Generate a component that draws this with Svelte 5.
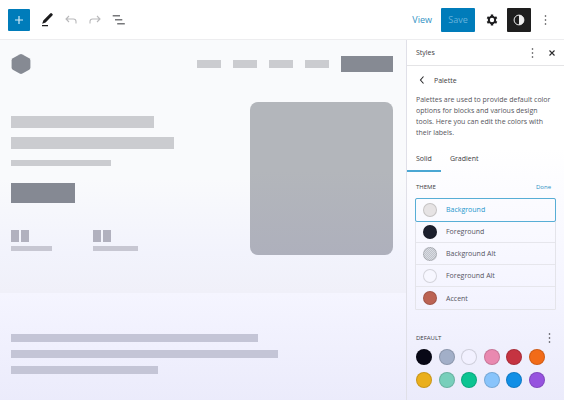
<script>
  let selected = $state('Background');
  let tab = $state('Solid');
  const theme = [
    { name: 'Background', color: '#e6e3e4' },
    { name: 'Foreground', color: '#1c1f2d' },
    { name: 'Background Alt', color: '#d9dce2', dotted: true },
    { name: 'Foreground Alt', color: '#f7f7ff' },
    { name: 'Accent', color: '#bc6353' }
  ];
  const defaults = [
    ['Black', '#080816'], ['Bluish gray', '#a2afc8'], ['White', '#f2f1ff'],
    ['Pink', '#e989b0'], ['Red', '#c53341'], ['Orange', '#f26b18'],
    ['Amber', '#eaaf1c'], ['Light green', '#78cfbb'], ['Green', '#0cc492'],
    ['Light blue', '#89c4fb'], ['Blue', '#118fe6'], ['Purple', '#9653df']
  ];
</script>

{#snippet dots()}
  <svg width="12" height="12" viewBox="0 0 12 12" fill="currentColor">
    <circle cx="6.5" cy="2" r=".8" /><circle cx="6.5" cy="6" r=".8" /><circle cx="6.5" cy="10" r=".8" />
  </svg>
{/snippet}

<div class="editor">
  <header class="topbar">
    <div class="tools">
      <button class="add" aria-label="Add block">
        <svg width="22" height="22" viewBox="0 0 22 22" stroke="#d3eaf7" stroke-width="1.2"><path d="M11 7v8M7 11h8" /></svg>
      </button>
      <button aria-label="Edit">
        <svg width="16" height="16" viewBox="0 0 16 16"><path d="M11.2 1.4Q12 .7 12.9 1.4L13.5 2Q14.2 2.8 13.4 3.6L6.6 10.6L3.2 11.8L4.3 8.4ZM3 13h6v1.2H3Z" fill="#1b1b1d" /></svg>
      </button>
      <button class="faded" aria-label="Undo">
        <svg width="16" height="16" viewBox="0 0 16 16" fill="none" stroke="currentColor" stroke-width="1.1"><path d="M6 4L3 7L6 10M3.4 7H10.4Q13 7 13 9.6V11.5" /></svg>
      </button>
      <button class="faded" aria-label="Redo">
        <svg width="16" height="16" viewBox="0 0 16 16" fill="none" stroke="currentColor" stroke-width="1.1"><path d="M10 4L13 7L10 10M12.6 7H5.6Q3 7 3 9.6V11.5" /></svg>
      </button>
      <button aria-label="List view">
        <svg width="16" height="16" viewBox="0 0 16 16" fill="#77787b"><path d="M1.7 3h7.3v1.6H1.7ZM4 7h7.3v1.6H4ZM6.2 11h7.6v1.6H6.2Z" /></svg>
      </button>
    </div>
    <div class="actions">
      <button class="view">View</button>
      <button class="save">Save</button>
      <button class="cog" aria-label="Settings">
        <svg width="14" height="14" viewBox="0 0 14 14" fill="none" stroke="#1c1c1e">
          <circle cx="7" cy="7" r="3.2" stroke-width="2" />
          <path d="M7 1.6V3.4M7 10.6V12.4M2.3 4.3L3.9 5.2M10.1 8.8L11.7 9.7M2.3 9.7L3.9 8.8M10.1 5.2L11.7 4.3" stroke-width="2.4" />
        </svg>
      </button>
      <button class="contrast" aria-label="Styles" aria-pressed="true">
        <svg width="24" height="24" viewBox="0 0 24 24"><circle cx="12" cy="12" r="4.9" fill="none" stroke="#eee" /><path d="M12 7a5 5 0 0 1 0 10Z" fill="#eee" /></svg>
      </button>
      <button class="more" aria-label="Options">{@render dots()}</button>
    </div>
  </header>

  <div class="body">
    <main class="canvas">
      <section class="hero">
        <div class="site-nav">
          <svg width="20" height="22" viewBox="0 0 20 22"><path d="M8.6 1.4Q10 .6 11.4 1.4L18.2 5.3Q19.4 6 19.4 7.4V14.6Q19.4 16 18.2 16.7L11.4 20.6Q10 21.4 8.6 20.6L1.8 16.7Q.6 16 .6 14.6V7.4Q.6 6 1.8 5.3Z" fill="#868a93" /></svg>
          <div class="links"><i></i><i></i><i></i><i></i><b></b></div>
        </div>
        <div class="columns">
          <div class="copy">
            <div class="line l1"></div>
            <div class="line l2"></div>
            <div class="line l3"></div>
            <div class="cta"></div>
            <div class="stats">
              <div class="stat"><span></span><span></span><p class="short"></p></div>
              <div class="stat"><span></span><span></span><p></p></div>
            </div>
          </div>
          <div class="photo"></div>
        </div>
      </section>
      <section class="text">
        <div class="row r1"></div>
        <div class="row r2"></div>
        <div class="row r3"></div>
      </section>
    </main>

    <aside>
      <div class="head">
        <strong>Styles</strong>
        <button class="menu" aria-label="More">{@render dots()}</button>
        <button aria-label="Close">
          <svg width="8" height="8" viewBox="0 0 8 8" stroke="#2a2a2c" stroke-width="1.1"><path d="M1.5 1.5L6.5 6.5M6.5 1.5L1.5 6.5" /></svg>
        </button>
      </div>
      <div class="crumb">
        <button aria-label="Back">
          <svg width="12" height="12" viewBox="0 0 12 12" fill="none" stroke="#2a2a2c" stroke-width="1.1"><path d="M7.5 2.5L4.5 6L7.5 9.5" /></svg>
        </button>
        <h2>Palette</h2>
      </div>
      <p class="desc">Palettes are used to provide default color options for blocks and various design tools. Here you can edit the colors with their labels.</p>
      <div class="tabs" role="tablist">
        {#each ['Solid', 'Gradient'] as name}
          <button role="tab" aria-selected={tab === name} onclick={() => (tab = name)}>{name}</button>
        {/each}
      </div>
      <div class="label theme"><h3>THEME</h3><button>Done</button></div>
      <div class="list">
        {#each theme as c}
          <button class="item" class:selected={selected === c.name} onclick={() => (selected = c.name)}>
            <span class="dot" class:dotted={c.dotted} style:background-color={c.color}></span>{c.name}
          </button>
        {/each}
      </div>
      <div class="label default"><h3>DEFAULT</h3><button class="menu" aria-label="Default options">{@render dots()}</button></div>
      <div class="swatches">
        {#each defaults as [name, color]}
          <button aria-label={name} style:background-color={color}></button>
        {/each}
      </div>
    </aside>
  </div>
</div>

<style>
  :global(body) { margin: 0; }
  .editor { min-height: 100vh; display: flex; flex-direction: column; font-family: "Open Sans", "Noto Sans", sans-serif; font-size: 7px; line-height: 11px; color: #3c3c42; }
  .editor * { box-sizing: border-box; }
  button { border: 0; padding: 0; margin: 0; background: none; font: inherit; color: inherit; cursor: pointer; }
  svg { display: block; }
  h2, h3, p { margin: 0; font-size: inherit; font-weight: 400; }
  .topbar { height: 40px; display: flex; align-items: center; justify-content: space-between; padding: 0 13px 0 8px; background: #fff; border-bottom: 1px solid #ededef; }
  .tools, .actions { display: flex; align-items: center; }
  .tools { gap: 8px; }
  .add { width: 22px; height: 22px; background: #007cba; border-radius: 1px; margin-right: 1px; }
  .faded { color: #b9b9bb; }
  .view { color: #3192c4; font-size: 9px; margin-right: 9px; }
  .save { width: 34px; height: 24px; background: #007cba; color: #66b3dc; border-radius: 1px; font-size: 9px; margin-right: 10px; }
  .cog { margin-right: 8px; }
  .contrast { background: #1e1e1e; border-radius: 1px; margin-right: 8px; }
  .more, .menu { color: #3a3a3d; }
  .body { flex: 1; display: flex; }
  .canvas { flex: 1; min-width: 0; display: flex; flex-direction: column; }
  .hero { padding: 13px 13px 38px 11px; background: linear-gradient(#f9fafc 55%, #f2f3fc 84%, #f0f0f9); }
  .site-nav { display: flex; align-items: center; justify-content: space-between; height: 22px; }
  .links { display: flex; align-items: center; gap: 12px; }
  .links i { width: 24px; height: 8px; background: #cbccd0; }
  .links b { width: 52px; height: 16px; background: #868a93; }
  .columns { display: flex; justify-content: space-between; margin-top: 27px; }
  .copy { flex: 1; padding-top: 14px; }
  .line { height: 12px; background: #cbccd0; }
  .l1 { width: 60%; }
  .l2 { width: 68%; margin-top: 9px; }
  .l3 { width: 42%; height: 6px; margin-top: 11px; }
  .cta { width: 64px; height: 20px; margin-top: 17px; background: #858993; }
  .stats { display: flex; gap: 37px; margin-top: 27px; }
  .stat { display: flex; flex-wrap: wrap; gap: 4px 2px; width: 45px; }
  .stat span { width: 8px; height: 12px; background: #b1b1be; }
  .stat p { width: 45px; height: 5px; background: #c7c7d2; }
  .stat .short { width: 41px; }
  .photo { width: 143px; height: 153px; border-radius: 8px; background: linear-gradient(#b3b6bb 45%, #aeb0bc); }
  .text { flex: 1; padding: 41px 13px 20px 11px; background: linear-gradient(#f5f5ff, #ebebfb); }
  .row { height: 8px; margin-bottom: 8px; background: #c4c5d6; }
  .r1 { width: 64.7%; }
  .r2 { width: 70%; }
  .r3 { width: 38.5%; }
  aside { width: 158px; border-left: 1px solid #e0e0e8; background: linear-gradient(#fff 30%, #f5f5ff 68%, #ebebfb); }
  .head { height: 26px; display: flex; align-items: center; gap: 10px; padding: 0 8px 0 9px; border-bottom: 1px solid #e4e4e6; }
  .head strong { flex: 1; font-weight: 500; }
  .crumb { display: flex; align-items: center; gap: 6px; height: 28px; padding-left: 9px; }
  .crumb h2 { font-weight: 500; }
  .desc { padding: 0 9px; color: #55555c; }
  .tabs { display: flex; height: 34px; }
  .tabs button { padding: 8px 9px 0; border-bottom: 2px solid transparent; font-weight: 500; }
  .tabs [aria-selected='true'] { border-color: #4ba7d3; }
  .label { display: flex; align-items: center; justify-content: space-between; padding: 0 9px; height: 12px; font-size: 6px; }
  .theme { margin-top: 9px; padding-right: 13px; }
  .theme button { color: #2b90c4; }
  .list { margin: 5px 8px 0 8px; border: 1px solid #e4e4ea; border-radius: 1px; }
  .item { width: 100%; height: 22px; display: flex; align-items: center; gap: 9px; padding-left: 7px; border-bottom: 1px solid #e6e6ec; color: #55555f; }
  .item:last-child { border-bottom: 0; }
  .selected { color: #2497cc; border-bottom-color: transparent; outline: 1px solid #57aed6; border-radius: 1px; }
  .dot { width: 14px; height: 14px; border-radius: 50%; border: 1px solid rgb(0 0 0 / 14%); }
  .dotted { background-image: repeating-conic-gradient(#c0c3cb 0 25%, transparent 0 50%); background-size: 2px 2px; }
  .default { margin-top: 22px; }
  .swatches { display: grid; grid-template-columns: repeat(6, 16px); justify-content: space-between; row-gap: 7px; margin: 5px 19px 12px 9px; }
  .swatches button { height: 16px; border-radius: 50%; border: 1px solid rgb(0 0 0 / 14%); }
</style>
